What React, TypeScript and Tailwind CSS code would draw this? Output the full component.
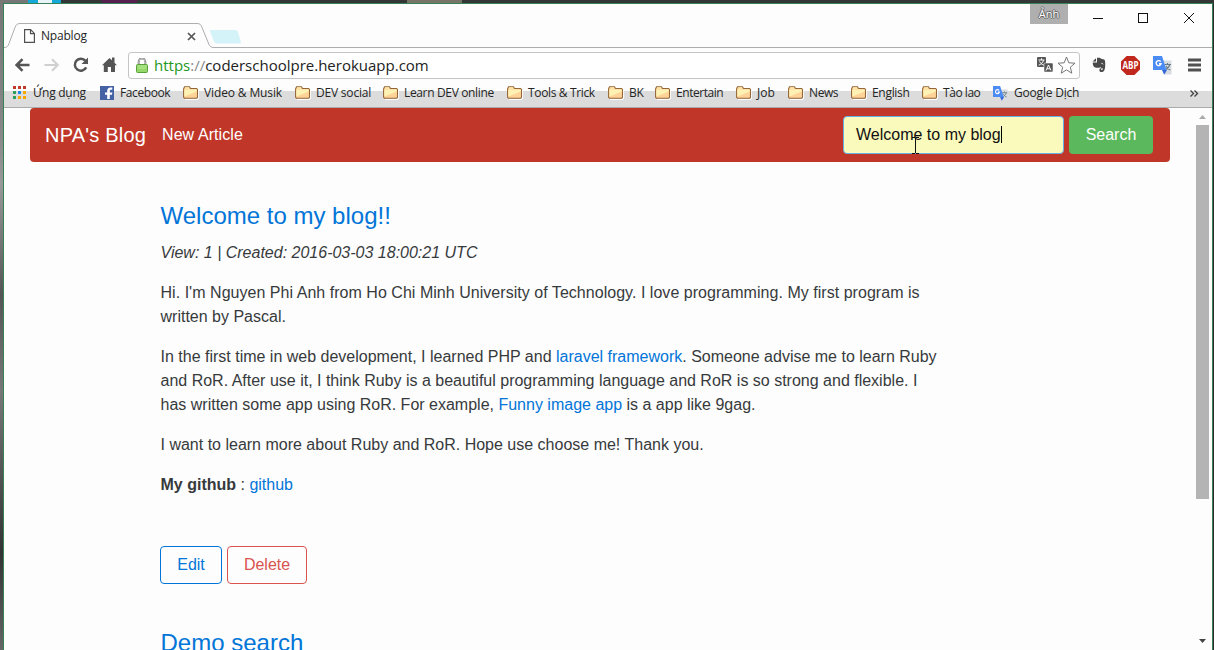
import React from "react";

type Bookmark = { label: string; width: string; tracking: string; icon: "apps" | "facebook" | "folder" | "translate" };

const bookmarks: Bookmark[] = [
  { label: "Ứng dụng", width: "w-[87px]", tracking: "tracking-[-0.25px]", icon: "apps" },
  { label: "Facebook", width: "w-[83px]", tracking: "tracking-[-0.4px]", icon: "facebook" },
  { label: "Video & Musik", width: "w-[112px]", tracking: "tracking-[-0.13px]", icon: "folder" },
  { label: "DEV social", width: "w-[88px]", tracking: "tracking-[-0.2px]", icon: "folder" },
  { label: "Learn DEV online", width: "w-[124px]", tracking: "tracking-[-0.35px]", icon: "folder" },
  { label: "Tools & Trick", width: "w-[101px]", tracking: "tracking-[-0.35px]", icon: "folder" },
  { label: "BK", width: "w-[47px]", tracking: "tracking-[-0.3px]", icon: "folder" },
  { label: "Entertain", width: "w-[81px]", tracking: "tracking-[-0.45px]", icon: "folder" },
  { label: "Job", width: "w-[52px]", tracking: "tracking-[0px]", icon: "folder" },
  { label: "News", width: "w-[63px]", tracking: "tracking-[-0.4px]", icon: "folder" },
  { label: "English", width: "w-[71px]", tracking: "tracking-[-0.3px]", icon: "folder" },
  { label: "Tào lao", width: "w-[71px]", tracking: "tracking-[-0.45px]", icon: "folder" },
  { label: "Google Dịch", width: "w-[110px]", tracking: "tracking-[-0.2px]", icon: "translate" },
];

function AppsIcon() {
  const colors = ["#c0392b", "#c0392b", "#c0392b", "#2f9e5b", "#1e88e5", "#f9a800", "#2f9e5b", "#f9a800", "#f9a800"];
  return (
    <svg width="14" height="14" viewBox="0 0 14 14" shapeRendering="crispEdges">
      {colors.map((c, i) => (
        <rect key={i} x={(i % 3) * 5} y={Math.floor(i / 3) * 5} width="3" height="3" fill={c} />
      ))}
    </svg>
  );
}

function FacebookIcon() {
  return (
    <svg width="14" height="14" viewBox="0 0 14 14">
      <rect width="14" height="14" fill="#4562a5" />
      <path d="M7.200 13V8.800H5V6.600h2.200V5c0-2.200 1.300-3.400 3.300-3.400H12.300v2.200h-1.100c-1 0-1.400.4-1.400 1.300v1.500h2.500L12 8.800H9.800V13z" fill="#fff" />
    </svg>
  );
}

function FolderIcon() {
  return (
    <svg width="16" height="14" viewBox="0 0 16 14">
      <path d="M2 13.500h13M15.500 4v9" stroke="#fff" fill="none" />
      <path d="M.6 11.300V2.800L1.500.7h5l1 1.800h6.100l.9.900v7.900l-.9 1H1.500z" fill="#ffd398" stroke="#94673a" strokeWidth="1.100" />
      <path d="M1.300 3.600h12.500v2L1.300 10.600z" fill="#fdf2b3" />
      <path d="M2.200 2h3.900" stroke="#fdf2b3" strokeWidth="1.200" />
    </svg>
  );
}

function TranslateIcon({ size }: { size: number }) {
  return (
    <svg width={size} height={size} viewBox="0 0 19 19">
      <path d="M8 4.500h10.500v14H12z" fill="#d9dce0" />
      <path d="M11.500 8.500h6.500M14.500 7v1.500M16.800 8.700c-.6 2.400-2.500 4.200-4.500 5.200M13 10c1 2 2.500 3.300 4.300 4" fill="none" stroke="#667b87" strokeWidth="1.100" />
      <path d="M9 14h5l-2.800 4.800z" fill="#3367d6" />
      <path d="M0 0h9l4.500 14H0z" fill="#4b8bf4" />
      <path d="M7.700 5.700A2.500 2.500 0 1 0 8.100 7.700H6" fill="none" stroke="#fff" strokeWidth="1.400" />
    </svg>
  );
}

function BookmarkItem({ item }: { item: Bookmark }) {
  return (
    <div className={`flex h-[22px] shrink-0 items-center ${item.width}`}>
      <span className={`flex shrink-0 ${item.icon === "apps" || item.icon === "facebook" ? "w-5" : "w-[21px]"}`}>
        {item.icon === "apps" && <AppsIcon />}
        {item.icon === "facebook" && <FacebookIcon />}
        {item.icon === "folder" && <FolderIcon />}
        {item.icon === "translate" && <TranslateIcon size={15} />}
      </span>
      <span className={`whitespace-nowrap text-xs ${item.tracking}`}>{item.label}</span>
    </div>
  );
}

function TitleBar() {
  return (
    <div className="relative flex h-11 shrink-0 items-start">
      <svg className="absolute left-0 top-0" width="1208" height="44" viewBox="0 0 1208 44">
        <path d="M0 43.500c3 0 4-1 5-4l6-16c1-2.500 2-4 5-4h177c3 0 4 1 5 4l7 17c1 2 2 3 5 3h998" fill="none" stroke="#adadad" />
        <path d="M207 26h24q2 0 3 2l3 10q0 1.500-2 1.500h-22q-2 0-3-2l-4-10q0-1.500 1-1.500z" fill="#d4f3f8" />
      </svg>
      <div className="flex w-[1026px] items-center pl-5 pt-6">
        <svg width="11" height="14" viewBox="0 0 11 14">
          <path d="M.6.600h6l3.800 3.800v9H.600zM6.500.600v4h4" fill="#fff" stroke="#505050" strokeWidth="1.200" />
        </svg>
        <span className="w-[147px] pl-1.5 text-xs leading-4 tracking-[-0.2px]">Npablog</span>
        <svg className="ml-[5px]" width="9" height="9" viewBox="0 0 9 9">
          <path d="M1 1l7 7M8 1L1 8" stroke="#555" strokeWidth="1.700" />
        </svg>
      </div>
      <div className="flex h-5 w-[38px] items-center justify-center bg-[#afafaf] text-[11px] text-white [text-shadow:1px_0_0_#666,-1px_0_0_#666,0_1px_0_#666,0_-1px_0_#666]">Ảnh</div>
      <svg className="ml-[25px] mt-2" width="103" height="12" viewBox="0 0 103 12" fill="none" stroke="#111">
        <path d="M0 6.500h10M45.500 1.500h9v9h-9z" shapeRendering="crispEdges" />
        <path d="M91 1l10 10M101 1L91 11" />
      </svg>
    </div>
  );
}

function Toolbar() {
  return (
    <div className="flex h-[34px] shrink-0 items-center pl-[11px]">
      <svg width="103" height="18" viewBox="0 0 103 18" fill="none">
        <path d="M14.500 9H1.500M7.500 3.200L1.700 9l5.800 5.800" stroke="#555" strokeWidth="2.600" />
        <path d="M29.500 9h13M37 3.200L42.800 9 37 14.800" stroke="#d0d0d0" strokeWidth="2.100" />
        <path d="M70.500 4.800A6 6 0 1 0 71.200 11.400" stroke="#555" strokeWidth="2.500" />
        <path d="M73 1.500V8h-6.500z" fill="#555" />
        <path d="M87 9.200L94.500 2l2.500 2.300V1.500h2.500v5.200L102 9.200h-2V16h-4v-5h-3.200v5h-4V9.200z" fill="#555" />
      </svg>
      <div className="ml-[10px] flex h-[27px] w-[952px] items-center rounded-[3px] border border-[#c5c5c5] bg-white">
        <svg className="ml-[7px] shrink-0" width="12" height="15" viewBox="0 0 12 15">
          <path d="M2.700 7V3.700a3.200 3.200 0 0 1 6.600 0V7" fill="none" stroke="#858585" strokeWidth="2" />
          <path d="M2.900 7V3.700a3.100 3.100 0 0 1 6.200 0V7" fill="none" stroke="#e1e1e1" strokeWidth=".7" />
          <rect x=".5" y="6.500" width="11" height="8" rx="1" fill="#95d86a" stroke="#58a13a" />
          <path d="M1.500 8h9M1.500 10h9" stroke="#b7ea95" />
        </svg>
        <div className="ml-1.5 w-[882px] text-[15px] leading-5 tracking-[0px] text-[#222]"><span className="text-[#219821]">https</span><span className="text-[#888]">://</span>coderschoolpre.herokuapp.com</div>
        <svg width="40" height="20" viewBox="0 0 40 20" className="shrink-0">
          <rect x="1" y="2" width="9" height="10" rx="1" fill="#555" />
          <path d="M2.500 5h6M5.500 3.300V5M7.500 5.200C7 7.500 5 9.500 2.700 10.200M3.500 6.500C4.500 8.500 6 9.500 8 10.200" fill="none" stroke="#fff" />
          <rect x="8" y="8" width="9" height="9" rx="1" fill="#555" stroke="#fff" strokeWidth=".5" />
          <path d="M10 15.500l2.500-5.500 2.500 5.500M11 13.800h3" fill="none" stroke="#fff" />
          <path d="M30.500 2l2.300 5.800 6.200.4-4.700 4 1.500 6-5.300-3.300-5.300 3.300 1.500-6-4.700-4 6.200-.4z" fill="#fff" stroke="#767676" />
        </svg>
      </div>
      <svg className="ml-3" width="14" height="16" viewBox="0 0 14 16">
        <path d="M4 1.200L.5 4.500H4zM5 .8h3l1 .9 3.200.7c1 .7 1.200 3 1 6.800-.3 3.700-1.200 5.800-3.400 5.800-2.100 0-2.400-1-2.400-2.100 0-1.200.9-1.900 2.100-1.900v1.200c-.7 0-.8.8 0 .9.900 0 1.300-.6 1.300-1.700-1.100-.3-2-.6-2.300-1.500-.7 1-3.300 1-5.200.7C1.500 10.200.7 7.700.7 5.500h4.300z" fill="#4a4a4a" />
        <path d="M9.300 6.600q1.500-.6 1.800.8" fill="none" stroke="#fff" strokeWidth=".8" />
      </svg>
      <svg className="ml-[15px]" width="19" height="19" viewBox="0 0 19 19">
        <path d="M5.600 0h7.800L19 5.600v7.800L13.400 19H5.600L0 13.400V5.600z" fill="#c1281d" />
        <text x="9.500" y="13.300" textAnchor="middle" textLength="16" lengthAdjust="spacingAndGlyphs" fontFamily="Open Sans, sans-serif" fontSize="10.500" fontWeight="700" fill="#fff">ABP</text>
      </svg>
      <span className="ml-[13px]"><TranslateIcon size={19} /></span>
      <svg className="ml-4" width="13" height="14" viewBox="0 0 13 14"><path d="M0 2h13M0 7h13M0 12h13" stroke="#505050" strokeWidth="3" /></svg>
    </div>
  );
}

function BlogNav() {
  return (
    <nav className="flex h-[54px] w-[1140px] items-center rounded bg-[#c0372a] text-white">
      <a className="ml-[15px] w-[117px] whitespace-nowrap text-xl leading-[30px] tracking-[0.2px]">NPA's Blog</a>
      <a className="w-[681px] text-base tracking-[0.08px]">New Article</a>
      <div className="relative flex h-[38px] w-[221px] items-center rounded border border-[#66afe9] bg-[#fafabd] pl-3 text-base text-[#111]">
        <span>Welcome to my blog</span>
        <span className="mb-0.5 h-[17px] w-px bg-black" />
        <svg className="absolute left-[68px] top-5" width="7" height="17" viewBox="0 0 7 17" shapeRendering="crispEdges">
          <path d="M0 .5h3M4 .5h3M3.500 1v15M0 16.500h3M4 16.500h3" stroke="#111" />
        </svg>
      </div>
      <button className="ml-[5px] h-[38px] w-[84px] rounded bg-[#5cb85c] text-base">Search</button>
    </nav>
  );
}

function Article() {
  return (
    <main className="ml-[130.5px] w-[790px] whitespace-nowrap text-base leading-6 text-[#373a3c]">
      <h2 className="mt-[39px] text-2xl leading-[30px] text-[#0275d8]">Welcome to my blog!!</h2>
      <p className="mt-2.5 italic">View: 1 | Created: 2016-03-03 18:00:21 UTC</p>
      <p className="mt-4"><span className="tracking-[0.033px]">Hi. I'm Nguyen Phi Anh from Ho Chi Minh University of Technology. I love programming. My first program is</span><br />written by Pascal.</p>
      <p className="mt-4">In the first time in web development, I learned PHP and <a className="text-[#0275d8]">laravel framework</a>. Someone advise me to learn Ruby<br />and RoR. After use it, I think Ruby is a beautiful programming language and RoR is so strong and flexible. I<br />has written some app using RoR. For example, <a className="text-[#0275d8]">Funny image app</a> is a app like 9gag.</p>
      <p className="mt-4">I want to learn more about Ruby and RoR. Hope use choose me! Thank you.</p>
      <p className="mt-4"><b>My github</b> : <a className="text-[#0275d8]">github</a></p>
      <div className="-ml-[0.5px] mt-[49px] flex gap-[5px]">
        <button className="h-[38px] w-[62px] rounded border border-[#0275d8] text-[#0275d8]">Edit</button>
        <button className="h-[38px] w-20 rounded border border-[#d9534f] text-[#d9534f]">Delete</button>
      </div>
      <h2 className="mt-[44px] text-2xl leading-[30px] text-[#0275d8]">Demo search</h2>
    </main>
  );
}

export default function App() {
  return (
    <div className="flex h-[650px] w-[1214px] flex-col overflow-hidden bg-[#292b2b]">
      <div className="flex h-[3px] shrink-0 bg-[#353737]">
        <div className="h-[3px] w-7 bg-[#777]" />
        <div className="h-[3px] w-[10px] bg-[#14a9d9]" />
        <div className="h-[3px] w-[14px] bg-[#e8f4f8]" />
        <div className="h-[3px] w-[9px] bg-[#14a9d9]" />
        <div className="ml-[41px] h-[3px] w-[35px] bg-[#55204d]" />
        <div className="ml-[270px] h-[3px] w-[55px] bg-[#777468]" />
      </div>
      <div className="flex min-h-0 flex-1">
        <div className="w-[3px] shrink-0 bg-[linear-gradient(#777,#888_20%,#999_28%,#555_45%,#777_60%,#333_85%,#666)]" />
        <div className="flex w-[1210px] flex-col border-l border-t border-[#388058] border-r bg-[#fdfdfd] font-['Open_Sans','Noto_Sans',sans-serif] text-[#252525]">
          <TitleBar />
          <Toolbar />
          <div className="flex h-[26px] shrink-0 items-start border-b border-[#aaa] bg-[linear-gradient(#fdfdfd_0_9px,#dcdcdc_9px)] pl-[9px]">
            <div className="flex w-[1177px]">
              {bookmarks.map((item) => <BookmarkItem key={item.label} item={item} />)}
            </div>
            <svg className="mt-2" width="9" height="7" viewBox="0 0 9 7"><path d="M.5.500l3 3-3 3M4.500.500l3 3-3 3" fill="none" stroke="#444" strokeWidth="1.400" /></svg>
          </div>
          <div className="flex min-h-0 flex-1 overflow-hidden font-['Liberation_Sans',Arial,sans-serif]">
            <div className="w-[1192px] shrink-0 pl-[26px]"><BlogNav /><Article /></div>
            <div className="flex h-[542px] w-[13px] flex-col items-center">
              <svg className="mt-[7px] shrink-0" width="7" height="4"><path d="M3.500 0L7 4H0z" fill="#aaa" /></svg>
              <div className="mt-1.5 h-[374px] w-[13px] shrink-0 bg-[#b4b4b4]" />
              <svg className="mb-[7px] mt-auto shrink-0" width="7" height="4"><path d="M0 0h7L3.500 4z" fill="#444" /></svg>
            </div>
          </div>
        </div>
      </div>
    </div>
  );
}
